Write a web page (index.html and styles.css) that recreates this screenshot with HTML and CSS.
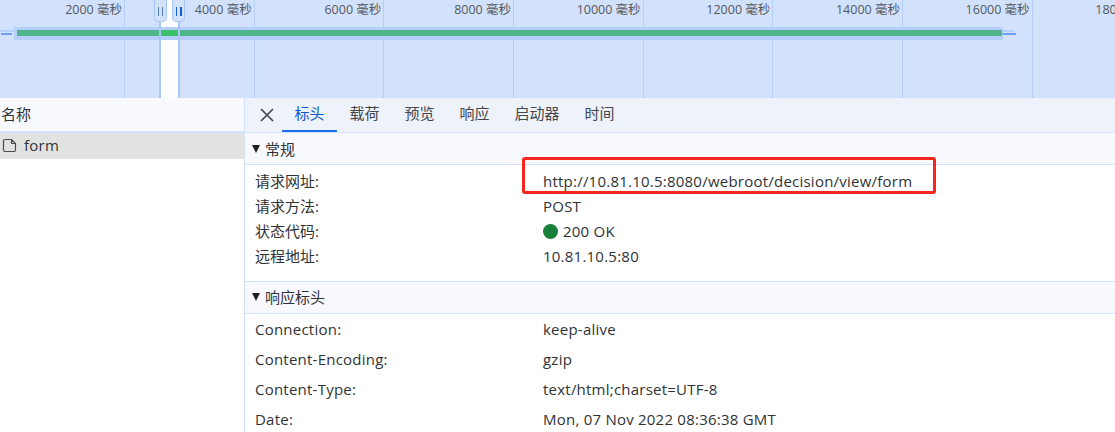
FILE: index.html
```html
<!DOCTYPE html>
<html lang="zh">
<head>
<meta charset="utf-8">
<title>网络</title>
<link rel="stylesheet" href="styles.css">
</head>
<body>
<section class="timeline">
  <div class="ruler">
    <div class="tick first"><span>2000 毫秒</span></div>
    <div class="tick"><span>4000 毫秒</span></div>
    <div class="tick"><span>6000 毫秒</span></div>
    <div class="tick"><span>8000 毫秒</span></div>
    <div class="tick"><span>10000 毫秒</span></div>
    <div class="tick"><span>12000 毫秒</span></div>
    <div class="tick"><span>14000 毫秒</span></div>
    <div class="tick"><span>16000 毫秒</span></div>
    <div class="tick last"><span>18000 毫秒</span></div>
  </div>
  <div class="stub stub-left-light"></div>
  <div class="stub stub-left"></div>
  <div class="band"><div class="bar"></div></div>
  <div class="stub stub-right-light"></div>
  <div class="stub stub-right"></div>
  <div class="window">
    <div class="handle left"><i></i><i></i></div>
    <div class="handle right"><i></i><i></i></div>
    <div class="window-bar"></div>
  </div>
</section>
<main class="panes">
  <aside class="names">
    <div class="names-head">名称</div>
    <div class="file">
      <svg class="file-icon" width="15" height="15" viewBox="0 0 15 15"><path d="M1.500 3A1.500 1.500 0 0 1 3 1.500H9.500L13.500 5.500V12A1.500 1.500 0 0 1 12 13.500H3A1.500 1.500 0 0 1 1.500 12Z M9.500 1.500V5.500H13.500" fill="none" stroke="#4a4d50" stroke-width="1.200"/></svg>
      <span class="latin">form</span>
    </div>
  </aside>
  <div class="details">
    <nav class="tabs">
      <svg class="close" width="14" height="14" viewBox="0 0 14 14"><path d="M1 1L13 13M13 1L1 13" stroke="#44474a" stroke-width="1.700"/></svg>
      <span class="tab active">标头</span>
      <span class="tab">载荷</span>
      <span class="tab">预览</span>
      <span class="tab">响应</span>
      <span class="tab">启动器</span>
      <span class="tab">时间</span>
    </nav>
    <div class="section-head"><span class="arrow"></span>常规</div>
    <div class="rows general">
      <div class="row"><span class="key">请求网址:</span><span class="latin">http://10.81.10.5:8080/webroot/decision/view/form</span></div>
      <div class="row"><span class="key">请求方法:</span><span class="latin">POST</span></div>
      <div class="row"><span class="key">状态代码:</span><span class="status latin"><i class="dot"></i>200 OK</span></div>
      <div class="row"><span class="key">远程地址:</span><span class="latin">10.81.10.5:80</span></div>
    </div>
    <div class="section-head second"><span class="arrow"></span>响应标头</div>
    <div class="rows response">
      <div class="row"><span class="key latin">Connection:</span><span class="latin">keep-alive</span></div>
      <div class="row"><span class="key latin">Content-Encoding:</span><span class="latin">gzip</span></div>
      <div class="row"><span class="key latin">Content-Type:</span><span class="latin">text/html;charset=UTF-8</span></div>
      <div class="row"><span class="key latin">Date:</span><span class="latin">Mon, 07 Nov 2022 08:36:38 GMT</span></div>
    </div>
  </div>
</main>
<div class="callout"></div>
</body>
</html>
```

FILE: styles.css
```css
* { box-sizing: border-box; }
html, body { margin: 0; height: 100%; overflow: hidden; background: #fff; }
body { font-family: "Open Sans", "Noto Sans CJK SC", sans-serif; font-size: 15px; color: #303336; position: relative; }
.latin { letter-spacing: 0.23px; }

.timeline { position: relative; height: 98px; background: #d3e2fc; overflow: hidden; }
.ruler { display: flex; height: 98px; }
.tick { flex: 0 0 129.67px; border-right: 1px solid #b6cffa; padding: 2px 2px 0 0; text-align: right; font-size: 12.500px; line-height: 16px; color: #55585c; white-space: nowrap; }
.tick.first { flex-basis: 125px; }
.band { position: absolute; left: 14px; top: 27px; width: 989px; height: 13px; background: #b5cefa; padding: 3px 1px 4px 3px; }
.bar { height: 6px; background: #4eb58c; }
.stub { position: absolute; height: 2px; }
.stub-left-light { left: 0; top: 30px; width: 14px; background: #b5cefa; }
.stub-left { left: 1px; top: 33px; width: 11px; background: #6c9ff5; }
.stub-right-light { left: 1003px; top: 30px; width: 10px; background: #b5cefa; }
.stub-right { left: 1003px; top: 33px; width: 13px; background: #6c9ff5; }
.window { position: absolute; left: 159px; top: 0; width: 21px; height: 98px; background: #fff; border-left: 2px solid #a8c7fa; border-right: 2px solid #a8c7fa; }
.window-bar { position: absolute; left: 0; right: 0; top: 27px; height: 13px; background: #b5cefa; }
.window-bar::after { content: ""; position: absolute; left: 0; right: 0; top: 3px; height: 6px; background: #3cc06a; }
.handle { position: absolute; z-index: 1; top: -4px; width: 13px; height: 26px; background: #d3e2fc; border: 1px solid #a8c7fa; border-radius: 0 0 4px 4px; display: flex; justify-content: center; align-items: center; gap: 3px; }
.handle i { width: 1px; height: 9px; background: #5a7fc0; margin-top: 4px; }
.handle.left { left: -7px; }
.handle.right { left: 11px; }
.handle.right i { background: #1a5fd0; }
.handle.right i + i { width: 2px; }

.panes { display: flex; height: 334px; }
.names { flex: 0 0 244px; background: #fff; }
.names-head { height: 35px; background: #f8f9fe; padding-left: 1px; line-height: 32px; border-bottom: 2px solid #d3e2fc; }
.file { height: 26px; background: #e1e3e1; display: flex; align-items: center; gap: 7px; padding: 0 0 2px 2px; color: #303336; }
.file-icon { flex: none; }
.details { flex: 1; border-left: 1px solid #d3e2fc; min-width: 0; }
.tabs { height: 35px; display: flex; align-items: stretch; background: #edf2fb; border-bottom: 1px solid #d3e2fc; padding-left: 15px; color: #44474a; }
.close { align-self: center; margin-right: 8px; margin-bottom: 1px; flex: none; }
.tab { padding: 0 12.500px; line-height: 31px; }
.tab.active { color: #0b57d0; box-shadow: inset 0 -2px 0 #1f6fe8; }
.section-head { height: 32px; background: #f8f9fe; border-bottom: 1px solid #d3e2fc; padding-left: 7px; display: flex; align-items: center; gap: 5px; }
.section-head.second { border-top: 1px solid #d3e2fc; height: 33px; padding-bottom: 2px; }
.arrow { width: 0; height: 0; border-left: 4px solid transparent; border-right: 4px solid transparent; border-top: 8px solid #1f1f1f; }
.rows { padding-left: 10px; }
.general { padding-top: 4px; padding-bottom: 12px; }
.row { display: flex; height: 25px; line-height: 25px; white-space: nowrap; }
.response .row { height: 30px; line-height: 30px; }
.key { flex: 0 0 288px; }
.status { display: flex; align-items: center; }
.dot { width: 15px; height: 15px; border-radius: 50%; background: #188038; margin-right: 5px; }

.callout { position: absolute; left: 522px; top: 157px; width: 414px; height: 37px; border: 3px solid #f8261c; border-radius: 3px; }
```
